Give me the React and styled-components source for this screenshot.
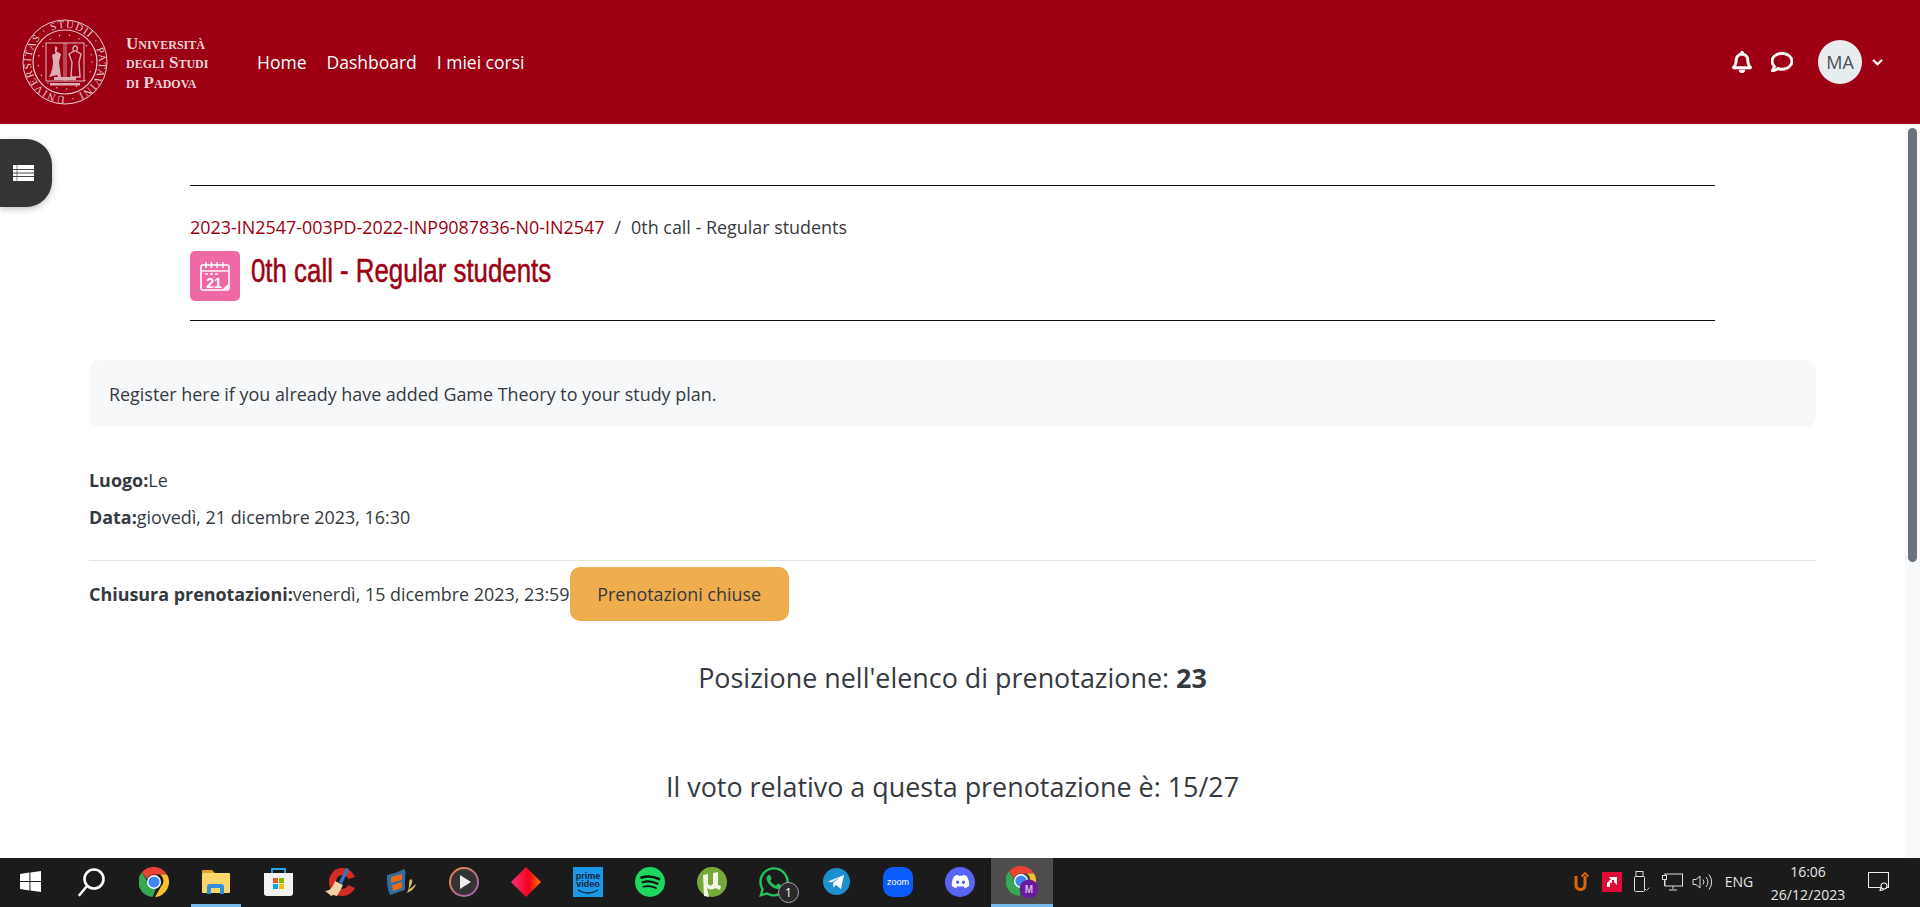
import React from "react";
import styled, { createGlobalStyle } from "styled-components";
import { FaRegBell, FaRegComment, FaChevronDown, FaWhatsapp, FaDiscord } from "react-icons/fa";

const Global = createGlobalStyle`
  html, body { margin: 0; padding: 0; height: 100%; overflow: hidden; background: #fff; }
  body { font-family: "Open Sans", "Noto Sans", sans-serif; font-size: 17.92px; color: #343a40; }
  * { box-sizing: border-box; }
`;

const Page = styled.div`position: relative; display: flex; flex-direction: column; height: 907px; overflow: hidden;`;
const Header = styled.header`flex: none; height: 124px; background: #9c0012; display: flex; align-items: center; padding: 0 37px 0 22px; color: #fff;`;
const Brand = styled.div`display: flex; align-items: center; gap: 18px; width: 235px; flex: none;`;
const BrandText = styled.div`font-family: "Liberation Serif", serif; font-variant: small-caps; font-weight: 700; font-size: 17px; line-height: 19.5px; color: #ecd5d8; white-space: nowrap; padding-top: 2px;`;
const Nav = styled.nav`display: flex; gap: 20px; font-size: 17.5px; color: #fff; flex: 1;`;
const NavLink = styled.a`color: #fff; white-space: nowrap;`;
const Tools = styled.div`display: flex; align-items: center; color: #fff;`;
const ToolIcon = styled.span`display: flex; width: 40px; justify-content: center; font-size: 22px; & svg { stroke: currentColor; stroke-width: 22px; }`;
const Avatar = styled.span`width: 44px; height: 44px; border-radius: 50%; background: #e9ecef; color: #495057; display: flex; align-items: center; justify-content: center; font-size: 18px; margin-left: 16px;`;
const Caret = styled.span`display: flex; margin-left: 10px; font-size: 11px; & svg { stroke: currentColor; stroke-width: 30px; }`;

const Middle = styled.div`flex: 1; display: flex; min-height: 0;`;
const Main = styled.main`flex: 1; min-width: 0; padding: 61px 89px 0; overflow: hidden;`;
const Scrollbar = styled.div`flex: none; width: 15px; background: #f8f9fa; padding: 4px 3px;`;
const Thumb = styled.div`width: 9px; height: 434px; border-radius: 5px; background: #6a737b;`;
const SideTab = styled.button`position: absolute; left: 0; top: 139px; width: 52px; height: 68px; border: 0; padding: 0 0 0 13px; display: flex; align-items: center; background: #343434; border-radius: 0 26px 26px 0; box-shadow: 0 2px 6px rgba(0,0,0,.25);`;

const TitleBlock = styled.section`margin: 0 101px; height: 136px; border-top: 1px solid #111; border-bottom: 1px solid #111; padding-top: 29px;`;
const Crumbs = styled.div`font-size: 17.92px; line-height: 24px; display: flex; gap: 10px; color: #343a40;`;
const Crumb = styled.a`color: #9c0012;`;
const TitleRow = styled.div`display: flex; align-items: center; gap: 11px; margin-top: 12px;`;
const CalIcon = styled.span`width: 50px; height: 50px; border-radius: 5px; background: #ee69a6; display: flex; align-items: center; justify-content: center;`;
const Title = styled.h1`margin: -13px 0 0; font-family: "Liberation Sans", sans-serif; font-weight: 400; font-size: 34px; line-height: 44px; color: #9c0012; white-space: nowrap; transform: scaleX(.76); transform-origin: left center; -webkit-text-stroke: .5px #9c0012;`;

const Notice = styled.div`margin-top: 39px; height: 67px; border-radius: 10px; background: #f7f8fa; padding: 0 20px; display: flex; align-items: center;`;
const Fact = styled.div`line-height: 24px; margin-top: ${p => p.$top}px;`;
const Rule = styled.hr`margin: 31px 0 0; border: 0; border-top: 1px solid #e3e4e6;`;
const Closing = styled.div`display: flex; align-items: center; margin-top: 6px;`;
const ClosedBtn = styled.span`display: flex; align-items: center; justify-content: center; width: 219px; height: 54px; border-radius: 10px; background: #f0ad4e; color: #343a40;`;
const Big = styled.p`margin: ${p => p.$top}px 0 0; text-align: center; font-size: 26.900px; line-height: 34px; color: #343a40;`;

const Taskbar = styled.footer`flex: none; height: 49px; background: #1b1b1b; display: flex; align-items: stretch; color: #e6e6e6;`;
const Cell = styled.div`position: relative; width: ${p => p.$w || 62}px; display: flex; align-items: center; justify-content: center; background: ${p => p.$active ? "#4d4d4d" : "transparent"}; padding-bottom: 2px;`;
const Under = styled.span`position: absolute; bottom: 0; left: ${p => p.$inset}px; right: ${p => p.$inset}px; height: 3px; background: #76b9ed;`;
const Badge = styled.span`position: absolute; left: 35px; top: 24px; width: 21px; height: 21px; border-radius: 50%; border: 1px solid #aaa; background: #2a2a2a; color: #fff; font-size: 12px; display: flex; align-items: center; justify-content: center;`;
const Tray = styled.div`margin-left: auto; display: flex; align-items: center; padding-bottom: 2px;`;
const TrayIcon = styled.span`width: 30px; display: flex; justify-content: center;`;
const Lang = styled.span`font-size: 14px; width: 44px; text-align: center;`;
const Clock = styled.div`width: 94px; text-align: center; font-size: 14px; line-height: 23px; padding-top: 2px;`;
const Notif = styled.span`display: flex; width: 46px; justify-content: center; margin-right: 19px;`;

const Seal = () => (
  <svg width="86" height="86" viewBox="0 0 86 86" fill="none" stroke="#e9cdd1">
    <circle cx="43" cy="43" r="42" strokeWidth="1" />
    <circle cx="43" cy="43" r="32" strokeWidth="1.2" />
    <circle cx="43" cy="43" r="27" strokeWidth="1.3" strokeDasharray=".1 10" strokeLinecap="round" />
    <defs><path id="ring" d="M43 77 a34 34 0 1 1 0 -68 a34 34 0 1 1 0 68" /></defs>
    <text fontFamily="Liberation Serif, serif" fontSize="10.500" fill="#e9cdd1" stroke="none" textLength="208" lengthAdjust="spacing">
      <textPath href="#ring">UNIVERSITAS · STUDII · PATAVINI ·</textPath>
    </text>
    <rect x="24" y="24" width="38" height="38" strokeWidth=".9" />
    <path d="M42 24v38M44 24v38" strokeWidth=".7" />
    <path d="M33 27c3 0 3 4 1 5l5 3-2 8 2 15h-3l-1-2-8 2c3-5 4-11 4-16l-1-6 4-2c-2-1-1-7 0-7z" fill="#dcaeb4" stroke="none" />
    <path d="M53 27c3 0 3 4 1 5l5 3-2 8 1 15h-9l1-15-3-8 5-3c-2-1-1-5 1-5z" fill="none" stroke="#dcaeb4" strokeWidth="1.4" />
    <rect x="32" y="58" width="22" height="3" fill="#dcaeb4" stroke="none" />
    <rect x="28" y="64" width="30" height="2.500" fill="#dcaeb4" stroke="none" />
  </svg>
);

const ListGlyph = () => (
  <svg width="21" height="16" viewBox="0 0 21 16">
    <rect width="21" height="16" fill="#fff" />
    <path d="M0 4.500h21M0 8h21M0 11.500h21" stroke="#343434" strokeWidth=".9" />
    <path d="M4 0v16" stroke="#343434" strokeWidth=".6" />
  </svg>
);

const Calendar = () => (
  <svg width="32" height="32" viewBox="0 0 32 32" fill="none" stroke="#fff">
    <rect x="2" y="5" width="28" height="25" rx="1.500" strokeWidth="1.600" />
    <path d="M2 11h28" strokeWidth="1.400" />
    <path d="M7 2v6M12.500 2v6M18 2v6M24 2v6" strokeWidth="1.500" />
    <path d="M6 14h3M11 14h3M16 14h3" strokeWidth="1.600" />
    <text x="15" y="27.500" textAnchor="middle" fontFamily="Liberation Sans, sans-serif" fontWeight="700" fontSize="14" fill="#fff" stroke="none">21</text>
    <path d="M29 24v5h-5z" fill="#fff" stroke="none" />
  </svg>
);

const WinLogo = () => (
  <svg width="21" height="21" viewBox="0 0 21 21" fill="#fff"><path d="M0 3l9.400-1.400V10H0zM10.400 1.500L21 0v10H10.400zM0 11h9.400v8.400L0 18zM10.400 11H21v10l-10.600-1.500z" /></svg>
);
const Search = () => (
  <svg width="28" height="30" viewBox="0 0 28 30" fill="none" stroke="#fff" strokeWidth="2.600"><circle cx="16" cy="12" r="9.500" /><path d="M9 19L1.500 28" strokeLinecap="round" /></svg>
);
const Chrome = ({ size = 30 }) => (
  <svg width={size} height={size} viewBox="0 0 30 30">
    <path d="M15 0a15 15 0 0 1 13 7.500H15a7.500 7.500 0 0 0-7 4.700L3 5.200A15 15 0 0 1 15 0z" fill="#ea4335" />
    <path d="M28 7.500A15 15 0 0 1 16 30l6.300-11A7.500 7.500 0 0 0 21 7.500z" fill="#fbc02d" />
    <path d="M3 5.200L9 15.500a7.500 7.500 0 0 0 8 6L13.500 29.900A15 15 0 0 1 3 5.200z" fill="#34a853" />
    <circle cx="15" cy="15" r="7" fill="#fff" /><circle cx="15" cy="15" r="5.600" fill="#4285f4" />
  </svg>
);
const Folder = () => (
  <svg width="28" height="26" viewBox="0 0 28 26"><path d="M0 2a1 1 0 0 1 1-1h9l3 3H0z" fill="#e0a526" /><rect y="4" width="28" height="20" rx="1" fill="#fbd668" /><path d="M5 25v-7a3 3 0 0 1 3-3h11a3 3 0 0 1 3 3v7h-4v-6H9v6z" fill="#2f8fdc" /></svg>
);
const Store = () => (
  <svg width="29" height="30" viewBox="0 0 29 30"><path d="M8 7V2h13v5" fill="none" stroke="#2aa8e8" strokeWidth="1.800" /><path d="M0 6h29v20a3 3 0 0 1-3 3H3a3 3 0 0 1-3-3z" fill="#f3f3f3" /><rect x="9" y="11" width="5" height="5" fill="#f25022" /><rect x="15" y="11" width="5" height="5" fill="#7fba00" /><rect x="9" y="17" width="5" height="5" fill="#00a4ef" /><rect x="15" y="17" width="5" height="5" fill="#ffb900" /></svg>
);
const CCleaner = () => (
  <svg width="31" height="30" viewBox="0 0 31 30">
    <path d="M30 10C27 3 21 1 17 1 9 1 4 8 4 15c0 8 6 14 13 14 6 0 10-3 13-8l-7-3c-1 2-3 4-6 4-4 0-6-3-6-7s3-7 6-7c3 0 5 1 6 4z" fill="#d32c25" />
    <path d="M21 1l3 1-7 15-3-2z" fill="#2d78c8" />
    <path d="M10 14l8 4-2 4-4 7-4-1-2 1-2-2-4-3c5 0 8-4 10-10z" fill="#f0d2a5" />
  </svg>
);
const Film = () => (
  <svg width="30" height="28" viewBox="0 0 30 28">
    <path d="M0 7c5-1 12-3 17-6 2 2 2 5 1 7v14c-5 2-10 3-15 5-3-6-3-14-3-20z" fill="#2f6f9e" />
    <path d="M4 9l11-3v6L4 15zM5 17l10-3v6L6 23z" fill="#ea6a1c" />
    <path d="M19 25c3-2 3-6 3-10 0-3 2-5 3-3s-1 6-3 9c3-1 5-4 7-5-1 4-5 8-10 9z" fill="#d9b562" />
  </svg>
);
const Player = () => (
  <svg width="30" height="30" viewBox="0 0 30 30"><defs><linearGradient id="pr" x1="0" y1="0" x2="1" y2="1"><stop offset="0" stopColor="#f08a3c" /><stop offset="1" stopColor="#a05cc8" /></linearGradient></defs><circle cx="15" cy="15" r="14" fill="#333" stroke="url(#pr)" strokeWidth="2" /><path d="M11 8l11 7-11 7z" fill="#eee" /></svg>
);
const Diamond = () => (
  <svg width="30" height="30" viewBox="0 0 30 30"><defs><linearGradient id="dm" x1="0" y1="0" x2="1" y2="0"><stop offset="0" stopColor="#ff2f7d" /><stop offset=".6" stopColor="#f3001c" /><stop offset="1" stopColor="#ff7a00" /></linearGradient></defs><path d="M15 0l15 15-15 15L0 15z" fill="url(#dm)" /></svg>
);
const Prime = () => (
  <svg width="30" height="30" viewBox="0 0 30 30"><rect width="30" height="30" fill="#1b98e8" /><text x="15" y="12" textAnchor="middle" fontFamily="Liberation Sans, sans-serif" fontWeight="700" fontSize="9" fill="#10263a">prime</text><text x="15" y="20" textAnchor="middle" fontFamily="Liberation Sans, sans-serif" fontWeight="700" fontSize="9" fill="#10263a">video</text><path d="M5 23c6 4 14 4 20 0" fill="none" stroke="#10263a" strokeWidth="1.300" /></svg>
);
const Spotify = () => (
  <svg width="30" height="30" viewBox="0 0 30 30" fill="none" stroke="#111" strokeLinecap="round"><circle cx="15" cy="15" r="15" fill="#1ed760" stroke="none" /><path d="M6.500 10.500c6-1.700 12-1.200 17.500 1.500" strokeWidth="2.700" /><path d="M7.500 15.200c5-1.300 10.500-.9 15 1.600" strokeWidth="2.200" /><path d="M8.500 19.600c4.200-1 8.500-.7 12.400 1.400" strokeWidth="1.800" /></svg>
);
const UTorrent = () => (
  <svg width="30" height="30" viewBox="0 0 30 30"><circle cx="15" cy="15" r="15" fill="#76a93a" /><path d="M6 8l5-1v9c0 3 4 3 5 1V6l5-1v13l3 1-1 4-5-2c-3 3-7 1-8 0l2 9-5-1z" fill="#f0f5e4" /></svg>
);
const Telegram = () => (
  <svg width="27" height="27" viewBox="0 0 27 27"><circle cx="13.500" cy="13.500" r="13.500" fill="#1c8fcf" /><path d="M5 13.500L21 7l-3 14-5-4-2.500 2.500-.5-4.500 7-6-8.500 5.500z" fill="#fff" /></svg>
);
const Zoom = () => (
  <svg width="30" height="30" viewBox="0 0 30 30"><rect width="30" height="30" rx="10" fill="#0b5cff" /><text x="15" y="18" textAnchor="middle" fontFamily="Liberation Sans, sans-serif" fontSize="9" fill="#fff">zoom</text></svg>
);
const DiscordDisc = styled.span`display: flex; width: 30px; height: 30px; border-radius: 50%; background: #5865f2; align-items: center; justify-content: center;`;
const Discord = () => <DiscordDisc><FaDiscord size={19} color="#fff" /></DiscordDisc>;
const Profile = () => (
  <svg width="32" height="32" viewBox="0 0 32 32"><g><Chrome size={30} /></g><circle cx="23" cy="23" r="9.500" fill="#6a1b9a" /><text x="23" y="27" textAnchor="middle" fontFamily="Liberation Sans, sans-serif" fontSize="10" fontWeight="700" fill="#d8b4ea">M</text></svg>
);

const UIcon = () => (
  <svg width="16" height="20" viewBox="0 0 16 20" fill="none" stroke="#d9650f" strokeWidth="3"><path d="M2 4v9c0 6 9 6 9 0V4" /><path d="M7.500 4.500l3.500-3.500 3.500 3.500" strokeWidth="1.800" /></svg>
);
const Amd = () => (
  <svg width="20" height="20" viewBox="0 0 20 20"><rect width="20" height="20" fill="#df0a36" /><path d="M7 5h8v8l-3-3V8H9zM5 15v-4l3-3h2v3H8v4z" fill="#fff" /></svg>
);
const Usb = () => (
  <svg width="16" height="21" viewBox="0 0 16 21" fill="none" stroke="#ddd" strokeWidth="1"><rect x="2" y=".5" width="7" height="5" /><rect x=".5" y="5.500" width="10" height="15" rx="1" /><path d="M11 18l1.500 1.500 3-3" strokeWidth=".8" /></svg>
);
const Net = () => (
  <svg width="21" height="18" viewBox="0 0 21 18" fill="none" stroke="#ddd" strokeWidth="1"><rect x="3" y="1" width="17.500" height="12" /><path d="M11 13v3M7 17h8" /><rect x=".5" y="2.500" width="4" height="4" fill="#1b1b1b" /><path d="M2.500 6.500V13" /></svg>
);
const Vol = () => (
  <svg width="21" height="18" viewBox="0 0 21 18" fill="none" stroke="#ddd" strokeWidth="1"><path d="M1 6.500h3l4-3.500v12l-4-3.500H1z" /><path d="M11 6.500a4 4 0 0 1 0 5M14 4a8 8 0 0 1 0 10M17 1.500a12 12 0 0 1 0 15" /></svg>
);
const Bubble = () => (
  <svg width="21" height="20" viewBox="0 0 21 20" fill="none" stroke="#eee" strokeWidth="1.100"><path d="M.5.500h20v15h-4.500c0 2-1.500 3-4 3l1-3H.5z" /><circle cx="16" cy="14" r="3" fill="#1b1b1b" /></svg>
);

const apps = [
  { C: Chrome }, { C: Folder, on: true }, { C: Store }, { C: CCleaner }, { C: Film },
  { C: Player }, { C: Diamond }, { C: Prime }, { C: Spotify }, { C: UTorrent },
];

export default function App() {
  return (
    <Page>
      <Global />
      <Header>
        <Brand>
          <Seal />
          <BrandText>Università<br />degli Studi<br />di Padova</BrandText>
        </Brand>
        <Nav>
          <NavLink>Home</NavLink>
          <NavLink>Dashboard</NavLink>
          <NavLink>I miei corsi</NavLink>
        </Nav>
        <Tools>
          <ToolIcon><FaRegBell /></ToolIcon>
          <ToolIcon><FaRegComment /></ToolIcon>
          <Avatar>MA</Avatar>
          <Caret><FaChevronDown /></Caret>
        </Tools>
      </Header>
      <Middle>
        <Main>
          <TitleBlock>
            <Crumbs>
              <Crumb>2023-IN2547-003PD-2022-INP9087836-N0-IN2547</Crumb>
              <span>/</span>
              <span>0th call - Regular students</span>
            </Crumbs>
            <TitleRow>
              <CalIcon><Calendar /></CalIcon>
              <Title>0th call - Regular students</Title>
            </TitleRow>
          </TitleBlock>
          <Notice>Register here if you already have added Game Theory to your study plan.</Notice>
          <Fact $top={41}><b>Luogo:</b>Le</Fact>
          <Fact $top={13}><b>Data:</b>giovedì, 21 dicembre 2023, 16:30</Fact>
          <Rule />
          <Closing>
            <span><b>Chiusura prenotazioni:</b>venerdì, 15 dicembre 2023, 23:59</span>
            <ClosedBtn>Prenotazioni chiuse</ClosedBtn>
          </Closing>
          <Big $top={40}>Posizione nell'elenco di prenotazione: <b>23</b></Big>
          <Big $top={75}>Il voto relativo a questa prenotazione è: 15/27</Big>
        </Main>
        <Scrollbar><Thumb /></Scrollbar>
      </Middle>
      <SideTab aria-label="Indice"><ListGlyph /></SideTab>
      <Taskbar>
        <Cell $w={60}><WinLogo /></Cell>
        <Cell $w={63}><Search /></Cell>
        {apps.map(({ C, on }, i) => (
          <Cell key={i}><C />{on && <Under $inset={6} />}</Cell>
        ))}
        <Cell><FaWhatsapp size={34} color="#25c05c" /><Badge>1</Badge></Cell>
        <Cell><Telegram /></Cell>
        <Cell><Zoom /></Cell>
        <Cell><Discord /></Cell>
        <Cell $active><Profile /><Under $inset={0} /></Cell>
        <Tray>
          <TrayIcon><UIcon /></TrayIcon>
          <TrayIcon><Amd /></TrayIcon>
          <TrayIcon><Usb /></TrayIcon>
          <TrayIcon><Net /></TrayIcon>
          <TrayIcon><Vol /></TrayIcon>
          <Lang>ENG</Lang>
          <Clock>16:06<br />26/12/2023</Clock>
          <Notif><Bubble /></Notif>
        </Tray>
      </Taskbar>
    </Page>
  );
}
